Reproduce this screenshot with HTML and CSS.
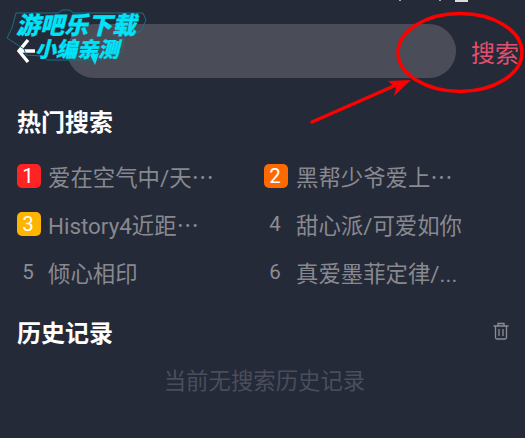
FILE: index.html
```html
<!DOCTYPE html>
<html lang="zh-CN">
<head>
  <meta charset="UTF-8">
  <title>搜索</title>
  <link rel="stylesheet" href="styles.css">
</head>
<body>
  <div class="screen">
    <div class="status-bits"><i class="bit"></i><i class="bit"></i><i class="bit wide"></i></div>
    <header class="search-row">
      <svg class="back" width="20" height="26" viewBox="0 0 20 26">
        <path d="M11 2 L2 13 L11 24 M2 13 H18" fill="none" stroke="#fff" stroke-width="3.4"/>
      </svg>
      <div class="search-box"></div>
      <span class="search-btn">搜索</span>
    </header>

    <h2 class="title">热门搜索</h2>
    <div class="hot-grid">
      <div class="hot-item"><span class="rank red">1</span><span class="name">爱在空气中/天<span class="dots">…</span></span></div>
      <div class="hot-item"><span class="rank orange">2</span><span class="name">黑帮少爷爱上<span class="dots">…</span></span></div>
      <div class="hot-item"><span class="rank yellow">3</span><span class="name">History4近距<span class="dots">…</span></span></div>
      <div class="hot-item"><span class="rank">4</span><span class="name">甜心派/可爱如你</span></div>
      <div class="hot-item"><span class="rank">5</span><span class="name">倾心相印</span></div>
      <div class="hot-item"><span class="rank">6</span><span class="name">真爱墨菲定律/...</span></div>
    </div>

    <div class="history-head">
      <h2 class="title">历史记录</h2>
      <svg class="trash" width="18" height="18" viewBox="0 0 18 18" fill="none" stroke="#8b8d94" stroke-width="1.3">
        <path d="M1.5 4 H16.5 M6 4 V1.5 H12 V4 M3.5 4 V15.5 Q3.5 17 5 17 H13 Q14.5 17 14.5 15.5 V4 M7 7 V14 M11 7 V14"/>
      </svg>
    </div>
    <p class="empty">当前无搜索历史记录</p>

    <!-- watermark and red markup on top of the screenshot -->
    <div class="logo">
      <svg class="logo-frame" width="150" height="70" viewBox="0 0 150 70" fill="none" stroke="#1a6f84" stroke-width="1">
        <path d="M16 13 H58 L62 10 H70 L73 13 H143 L146 20 L141 31 L124 37 L123 51 L101 60 L47 60 L42 56 L26 55 L24 49 L7 38 L12 28 Z"/>
        <path d="M90 55 L99 53 L95 65 Z" fill="#09dcf0" stroke="none"/>
      </svg>
      <div class="logo-top">游吧乐下载</div>
      <div class="logo-bottom">小编亲测</div>
    </div>
    <svg class="markup" width="525" height="438" viewBox="0 0 525 438">
      <ellipse cx="460" cy="52.5" rx="62" ry="39" fill="none" stroke="#f00" stroke-width="3.5"/>
      <path d="M312 122 L394 86" stroke="#f00" stroke-width="3.5" stroke-linecap="round"/>
      <path d="M388 81 L411 80 L394 96 L396 88 Z" fill="#f00"/>
    </svg>
  </div>
</body>
</html>
```

FILE: styles.css
```css
* {
  box-sizing: border-box;
}
html, body {
  margin: 0;
  padding: 0;
}
body {
  font-family: Roboto, "Noto Sans CJK SC", sans-serif;
  background-color: #252a38;
}
.screen {
  position: relative;
  width: 525px;
  height: 438px;
  overflow: hidden;
  padding: 24px 0 0 17px;
  background-color: #252a38;
}
.status-bits {
  position: absolute;
  top: 0;
  left: 399px;
  display: flex;
  gap: 38px;
}
.bit {
  width: 2px;
  height: 1px;
  background: #aaa;
}
.bit.wide {
  width: 13px;
  height: 2px;
  margin-left: -24px;
  background: #ddd;
}
.search-row {
  display: flex;
  align-items: center;
  height: 54px;
}
.back {
  margin-right: 30px;
  flex: none;
}
.search-box {
  width: 389px;
  height: 54px;
  border-radius: 27px;
  background-color: #4a4d57;
}
.search-btn {
  margin-left: 15px;
  font-size: 24px;
  color: #e0506e;
}
.title {
  margin: 0;
  font-size: 24px;
  line-height: 32px;
  font-weight: 700;
  color: #fff;
}
.search-row + .title {
  margin-top: 29px;
}
.hot-grid {
  display: grid;
  grid-template-columns: 247px 1fr;
  grid-auto-rows: 48px;
  margin-top: 13px;
}
.hot-item {
  display: flex;
  align-items: center;
  gap: 7px;
  height: 48px;
}
.rank {
  width: 24px;
  height: 24px;
  padding-right: 2px;
  border-radius: 5px;
  font-size: 20.5px;
  line-height: 24px;
  text-align: center;
  color: #8b8d94;
}
.rank.red {
  background: #ff2423;
  color: #fff;
}
.rank.orange {
  background: #ff6a00;
  color: #fff;
}
.rank.yellow {
  background: #ffb400;
  color: #fff;
}
.name {
  font-size: 22.4px;
  white-space: nowrap;
  color: #88898f;
}
.hot-item:nth-child(even) .name {
  margin-left: 1px;
}
.dots {
  font-family: "Noto Sans CJK SC", sans-serif;
}
.history-head {
  display: flex;
  align-items: center;
  justify-content: space-between;
  width: 493px;
  margin-top: 22px;
}
.trash {
  margin-top: -6px;
}
.empty {
  margin: 16px 0 0 -13px;
  font-size: 22.4px;
  line-height: 30px;
  text-align: center;
  color: #4a4e5c;
}
.logo {
  position: absolute;
  top: 0;
  left: 0;
  width: 150px;
  height: 70px;
  font-style: italic;
  font-weight: 900;
  color: #00e4fa;
  -webkit-text-stroke: 0.25px #00e4fa;
}
.logo-frame {
  position: absolute;
  top: 0;
  left: 0;
}
.logo-top {
  position: absolute;
  top: 12px;
  left: 16px;
  font-size: 24px;
  line-height: 28px;
  white-space: nowrap;
}
.logo-bottom {
  position: absolute;
  top: 38px;
  left: 35px;
  font-size: 21px;
  line-height: 24px;
  white-space: nowrap;
}
.markup {
  position: absolute;
  top: 0;
  left: 0;
}
```
